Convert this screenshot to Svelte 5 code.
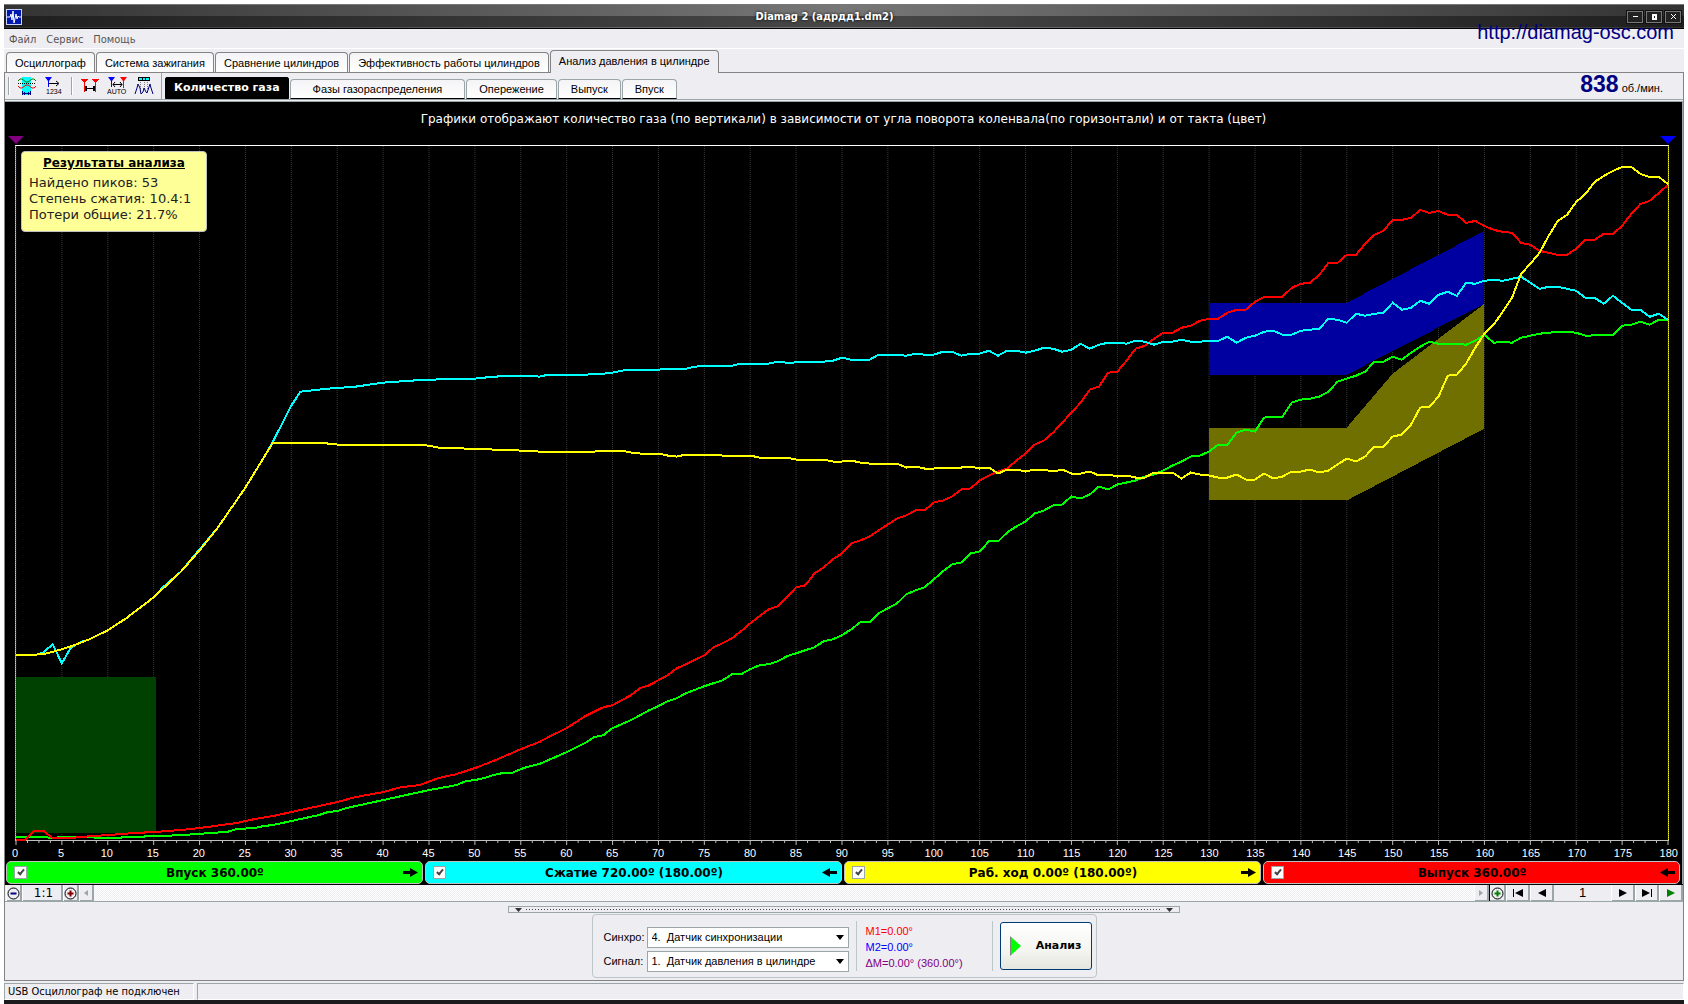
<script lang="ts">
    const TOP = 145;
    const BASE = 840;

    const mainTabs = [
        "Осциллограф",
        "Система зажигания",
        "Сравнение цилиндров",
        "Эффективность работы цилиндров",
        "Анализ давления в цилиндре",
    ];
    const subTabs = [
        "Количество газа",
        "Фазы газораспределения",
        "Опережение",
        "Выпуск",
        "Впуск",
    ];

    let mainTab = $state(4);
    let subTab = $state(0);

    // one curve per stroke, "degree,row" pairs
    let strokes = $state([
        {
            id: "intake",
            label: "Впуск 360.00º",
            color: "#00ff00",
            visible: true,
            forward: true,
            points:
                "0,837 3,837 4,838 5,837 8,837 9,838 11,838 12,837 16,836 18,835 20,834 21,833 23,832 24,829 26,828 27,826 28,825 30,821 32,817 33,815 34,812 35,811 36,808 38,804 40,800 45,790 48,785 49,781 50,780 51,778 52,775 53,773 54,773 55,769 56,766 57,764 58,760 60,752 62,743 63,737 64,735 65,728 67,720 69,710 70,706 71,701 72,698 73,693 75,686 77,680 78,674 79,674 80,669 81,665 82,664 83,661 84,656 85,653 87,647 88,641 89,639 90,635 91,629 92,622 93,622 94,613 95,608 96,603 97,594 98,590 99,587 100,579 101,571 102,564 103,562 104,553 105,551 106,541 107,541 108,532 109,526 110,521 111,513 112,510 113,505 114,504 115,496 116,498 117,494 118,486 119,489 120,484 121,482 122,480 123,476 124,474 125,470 126,465 127,461 128,456 129,455 130,451 131,444 132,444 133,432 134,429 135,431 136,417 137,416 138,416 139,402 140,399 141,398 142,396 143,391 144,381 145,378 146,375 147,371 148,361 149,361 150,356 151,359 152,352 153,346 154,341 155,343 157,343 158,344 159,340 160,334 161,342 162,341 163,342 164,337 165,335 166,333 168,331 169,331 170,332 171,335 174,334 175,325 176,324 177,321 178,324 179,319 180,319",
        },
        {
            id: "compression",
            label: "Сжатие 720.00º (180.00º)",
            color: "#00ffff",
            visible: true,
            forward: false,
            points:
                "0,655 2,655 3,652 4,644 5,663 6,647 7,642 8,639 10,630 12,618 15,597 16,587 18,571 20,549 22,527 25,487 27,457 28,441 29,423 30,405 31,391 34,388 37,386 40,382 43,380 45,379 50,378 52,376 55,375 56,375 57,376 58,374 62,374 64,373 65,372 66,370 67,369 70,369 71,368 73,368 74,366 75,365 78,365 79,363 82,363 83,361 84,362 88,361 89,360 90,357 91,359 93,359 94,354 96,354 97,355 98,353 99,354 100,354 101,351 102,351 103,355 104,353 105,353 106,350 107,355 108,350 109,350 110,352 111,350 112,347 113,348 114,351 115,349 116,343 117,348 118,344 119,342 120,342 121,343 122,340 123,341 124,344 125,341 126,341 127,339 128,341 129,341 130,340 131,340 132,336 133,342 134,337 135,335 136,331 137,330 138,334 139,334 140,330 141,329 142,328 143,318 144,319 145,322 146,313 147,315 148,313 149,312 150,302 151,309 152,307 153,300 154,303 155,294 156,291 157,295 158,282 159,283 160,280 161,279 162,280 163,278 164,276 165,282 166,288 167,286 168,286 169,288 170,290 171,297 172,297 173,303 174,295 175,302 176,309 177,309 178,316 179,313 180,319",
        },
        {
            id: "power",
            label: "Раб. ход 0.00º (180.00º)",
            color: "#ffff00",
            visible: true,
            forward: true,
            points:
                "0,655 3,654 5,649 6,646 8,639 10,630 12,618 15,597 18,571 20,550 22,527 25,487 27,457 28,442 33,442 35,444 42,444 45,445 46,447 49,448 52,449 55,450 57,451 63,451 64,450 66,450 67,452 68,453 70,453 71,455 72,456 73,454 76,454 77,455 80,455 81,457 84,457 85,459 88,459 89,461 90,461 91,460 92,462 93,463 96,463 97,467 98,466 99,468 100,468 101,467 103,467 104,466 105,468 106,467 107,473 108,469 109,469 110,471 111,469 112,469 113,471 114,469 115,473 116,473 117,471 118,475 119,474 120,476 121,475 122,477 123,477 124,472 126,472 127,478 128,472 129,474 130,475 131,477 132,477 133,474 134,479 135,479 136,473 137,478 138,476 139,471 140,471 141,469 142,472 143,470 144,464 145,458 146,461 147,456 148,446 149,446 150,436 151,434 152,424 153,407 154,406 155,396 156,375 157,374 158,363 159,347 160,333 161,324 162,311 163,297 164,273 165,263 166,252 167,235 168,220 169,214 170,201 171,193 172,181 173,175 174,170 175,166 176,166 177,173 178,176 179,176 180,183",
        },
        {
            id: "exhaust",
            label: "Выпуск 360.00º",
            color: "#ff0000",
            visible: true,
            forward: false,
            points:
                "0,840 1,840 2,831 3,831 4,838 6,838 7,837 10,835 13,833 15,832 18,830 20,828 24,823 25,821 26,819 28,816 30,812 34,804 35,802 37,797 40,792 42,787 44,785 46,778 48,774 50,768 52,761 55,749 57,742 58,737 60,728 62,716 64,707 65,705 67,695 68,688 69,685 70,680 71,675 72,668 73,664 75,655 76,647 77,643 78,638 79,631 80,623 81,616 82,609 83,606 84,597 85,587 86,585 87,573 88,567 89,559 90,553 91,543 92,540 93,536 94,530 95,524 96,518 97,515 98,510 99,510 100,502 101,500 102,496 103,489 104,488 105,480 106,475 107,471 108,468 109,460 110,453 111,444 112,440 113,432 114,422 115,412 116,402 117,389 118,386 119,372 120,371 121,360 122,348 123,345 124,338 125,332 126,332 127,327 128,325 129,320 130,318 131,318 132,312 133,309 134,309 135,301 136,296 138,296 139,287 140,283 141,282 142,274 143,262 144,262 145,254 146,254 147,243 148,234 149,230 150,219 151,219 152,217 153,209 154,212 155,210 156,214 157,214 158,222 159,220 160,225 161,229 162,231 163,232 164,242 165,244 166,250 167,252 168,254 169,254 170,248 171,239 172,239 173,233 174,233 175,225 176,213 177,203 178,200 179,192 180,184",
        },
    ]);

    // drawing order differs from the order of the buttons
    const curves = $derived(
        [0, 3, 1, 2].map((i) => strokes[i]).filter((s) => s.visible),
    );

    const zones = [
        { color: "#004000", points: "0,677 15.2,677 15.2,833 0,833" },
        { color: "#0000a0", points: "130,302 145,302 160,230 160,303 145,374 130,374" },
        { color: "#707000", points: "130,427 145,427 150,373 160,303 160,428 145,500 130,500" },
    ];

    const degrees = Array.from({ length: 37 }, (_, i) => i * 5);
    const ticks = Array.from({ length: 145 }, (_, i) => i * 1.25);
</script>

<div class="window">
    <header class="titlebar">
        <svg class="app-icon" width="16" height="16" viewBox="0 0 16 16">
            <rect width="16" height="16" fill="#c8d4ff" />
            <rect x="1" y="1" width="14" height="14" fill="#0018b0" />
            <path d="M1 8h3l1-3 1 6 1-9 1 12 2-9 1 5 1-3 1 1h2" fill="none" stroke="#fff" />
        </svg>
        <h1>Diamag 2 (адрдд1.dm2)</h1>
        <div class="win-buttons">
            <button aria-label="Свернуть">
                <svg width="7" height="7" viewBox="0 0 7 7"><path d="M1 3h5v1H1z" fill="#fff" /></svg>
            </button>
            <button aria-label="Восстановить">
                <svg width="7" height="7" viewBox="0 0 7 7"><path d="M1 1h5v6H1zM3 3v2h1V3z" fill="#fff" fill-rule="evenodd" /></svg>
            </button>
            <button aria-label="Закрыть">
                <svg width="7" height="7" viewBox="0 0 7 7"><path d="M1 1l5 5M6 1L1 6" stroke="#fff" /></svg>
            </button>
        </div>
    </header>

    <nav class="menu">
        <button>Файл</button>
        <button>Сервис</button>
        <button>Помощь</button>
        <a href="http://diamag-osc.com">http://diamag-osc.com</a>
    </nav>

    <div class="tabs main-tabs">
        {#each mainTabs as tab, i}
            <button class:active={mainTab === i} onclick={() => (mainTab = i)}>{tab}</button>
        {/each}
    </div>

    <main>
        <div class="toolbar">
            <div class="tools">
                <button aria-label="Период сигнала">
                    <svg width="20" height="18" viewBox="0 0 20 18">
                        <path d="M5 0h9v18H5z" fill="#00ffff" />
                        <path d="M1 4l2-2h2l4 3h2l4-3h2l2 2" fill="none" stroke="#008000" />
                        <path d="M1 6.5h18" stroke="#000" stroke-dasharray="1 1" />
                        <path d="M1 9l2 2h2l4-3h2l4 3h2l2-2" fill="none" stroke="#ff0000" />
                        <path d="M5 16.5h9M5.5 14v4M13.5 14v4M7.5 15v3M11.5 15v3" stroke="#000080" />
                    </svg>
                </button>
                <button aria-label="Нумерация">
                    <svg width="20" height="18" viewBox="0 0 20 18">
                        <path d="M1 0h7L5 4v6H4V4z" fill="#0000ff" />
                        <path d="M5 6.5h9M12 4l3 2.5L12 9" fill="none" stroke="#000" />
                        <text x="2" y="17" font-size="7">1234</text>
                    </svg>
                </button>
            </div>
            <div class="tools">
                <button aria-label="Маркеры">
                    <svg width="20" height="18" viewBox="0 0 20 18" shape-rendering="crispEdges">
                        <path d="M1 2h7L5 6v9H4V6zM12 2h7l-3 4v9h-1V6z" fill="#ff0000" />
                        <path d="M5 11h10v1H5zM5 9h2v5H5zM13 9h2v5h-2z" fill="#000" />
                    </svg>
                </button>
                <button aria-label="Автоматические маркеры">
                    <svg width="20" height="18" viewBox="0 0 20 18">
                        <path d="M1 0h7L5 4v6H4V4z" fill="#0000ff" />
                        <path d="M13 0h7l-3 4v7h-1V4z" fill="#ff0000" />
                        <path d="M6 7.5h9M8 5L6 7.5 8 10M13 5l2 2.5L13 10" fill="none" stroke="#000" />
                        <text x="0" y="17" font-size="7">AUTO</text>
                    </svg>
                </button>
                <button aria-label="Поиск пиков">
                    <svg width="20" height="18" viewBox="0 0 20 18">
                        <path d="M4 0h12v4H4z" />
                        <path d="M5 1h3v2H5zM9 1h2v2H9zM12 1h3v2h-3z" fill="#00ffff" />
                        <path d="M6.5 5v8M10.5 5v8M13.5 5v8" stroke="#808080" stroke-dasharray="1 1" />
                        <path d="M1 17l2-6 1-4 2 4 1 6 2-2 1-4 2 4 1 1 2-6 1-3 1 4 2 6" fill="none" stroke="#000080" />
                    </svg>
                </button>
            </div>
            <div class="tabs sub-tabs">
                {#each subTabs as tab, i}
                    <button class:active={subTab === i} onclick={() => (subTab = i)}>{tab}</button>
                {/each}
            </div>
            <div class="rpm"><strong>838</strong> об./мин.</div>
        </div>

        <section class="chart">
            <h2>
                Графики отображают количество газа (по вертикали) в зависимости от угла поворота
                коленвала(по горизонтали) и от такта (цвет)
            </h2>
            <div class="markers">
                <i class="marker m1"></i>
                <i class="marker m2"></i>
            </div>
            <div class="plot">
                <svg viewBox="0 {TOP} 180 {BASE - TOP}" preserveAspectRatio="none">
                    {#each degrees as d}
                        <line class="grid" x1={d} y1={TOP} x2={d} y2={BASE} />
                    {/each}
                    {#each zones as zone}
                        <polygon points={zone.points} fill={zone.color} />
                    {/each}
                    {#each curves as curve (curve.id)}
                        <polyline points={curve.points} stroke={curve.color} />
                    {/each}
                    {#each ticks as t}
                        <line class="tick" x1={t} y1={BASE} x2={t} y2={BASE + (t % 5 ? 3 : 5)} />
                    {/each}
                </svg>
                <aside class="results">
                    <h3>Результаты анализа</h3>
                    <p>Найдено пиков: 53</p>
                    <p>Степень сжатия: 10.4:1</p>
                    <p>Потери общие: 21.7%</p>
                </aside>
            </div>
            <div class="scale">
                {#each degrees as d}
                    <span>{d}</span>
                {/each}
            </div>
            <div class="strokes">
                {#each strokes as stroke (stroke.id)}
                    <label class="stroke" style="background-color: {stroke.color}">
                        <input type="checkbox" bind:checked={stroke.visible} />
                        <span>{stroke.label}</span>
                        <svg class:back={!stroke.forward} width="15" height="9" viewBox="0 0 15 9">
                            <path d="M0 3h7V0l8 4.5L7 9V6H0z" />
                        </svg>
                    </label>
                {/each}
            </div>
        </section>

        <div class="scroller">
            <button aria-label="Уменьшить">
                <svg width="13" height="13" viewBox="0 0 13 13">
                    <circle cx="6.5" cy="6.5" r="5.5" fill="none" stroke="#000" />
                    <path d="M3.500 5.500h6v2h-6z" fill="#000080" />
                </svg>
            </button>
            <button class="ratio">1:1</button>
            <button aria-label="Увеличить">
                <svg width="13" height="13" viewBox="0 0 13 13">
                    <circle cx="6.5" cy="6.5" r="5.5" fill="none" stroke="#000" />
                    <path d="M3.5 5.5h2v-2h2v2h2v2h-2v2h-2v-2h-2z" fill="#800000" />
                </svg>
            </button>
            <button class="arrow" aria-label="Влево">
                <svg width="4" height="6" viewBox="0 0 4 6"><path d="M4 0v6L0 3z" fill="#9aa6a8" /></svg>
            </button>
            <div class="track"></div>
            <button class="arrow" aria-label="Вправо">
                <svg width="4" height="6" viewBox="0 0 4 6"><path d="M0 0v6l4-3z" fill="#9aa6a8" /></svg>
            </button>
            <button class="add" aria-label="Добавить">
                <svg width="13" height="13" viewBox="0 0 13 13">
                    <circle cx="6.5" cy="6.5" r="5.5" fill="none" stroke="#000" />
                    <path d="M3.5 5.5h2v-2h2v2h2v2h-2v2h-2v-2h-2z" fill="#008000" />
                </svg>
            </button>
            <button class="step" aria-label="В начало">
                <svg width="10" height="8" viewBox="0 0 10 8"><path d="M0 0h1v8H0zM10 0v8L2 4z" /></svg>
            </button>
            <button class="step" aria-label="Назад">
                <svg width="8" height="8" viewBox="0 0 8 8"><path d="M8 0v8L0 4z" /></svg>
            </button>
            <output>1</output>
            <button class="step" aria-label="Вперёд">
                <svg width="8" height="8" viewBox="0 0 8 8"><path d="M0 0v8l8-4z" /></svg>
            </button>
            <button class="step" aria-label="В конец">
                <svg width="10" height="8" viewBox="0 0 10 8"><path d="M9 0h1v8H9zM0 0v8l8-4z" /></svg>
            </button>
            <button class="step" aria-label="Воспроизвести">
                <svg width="8" height="8" viewBox="0 0 8 8"><path d="M0 0v8l8-4z" fill="#008000" /></svg>
            </button>
        </div>

        <section class="controls">
            <div class="splitter">
                <svg width="7" height="4" viewBox="0 0 7 4"><path d="M0 0h7L3.5 4z" fill="#333" /></svg>
                <i></i>
                <svg width="7" height="4" viewBox="0 0 7 4"><path d="M0 0h7L3.5 4z" fill="#333" /></svg>
            </div>
            <div class="group">
                <div class="fields">
                    <label for="sync">Синхро:</label>
                    <div class="combo">
                        <select id="sync">
                            <option>4.&nbsp; Датчик синхронизации</option>
                        </select>
                        <svg width="8" height="5" viewBox="0 0 8 5"><path d="M0 0h8L4 5z" /></svg>
                    </div>
                    <label for="signal">Сигнал:</label>
                    <div class="combo">
                        <select id="signal">
                            <option>1.&nbsp; Датчик давления в цилиндре</option>
                        </select>
                        <svg width="8" height="5" viewBox="0 0 8 5"><path d="M0 0h8L4 5z" /></svg>
                    </div>
                </div>
                <div class="readings">
                    <span class="r1">M1=0.00°</span>
                    <span class="r2">M2=0.00°</span>
                    <span class="r3">ΔM=0.00° (360.00°)</span>
                </div>
                <button class="analyze">
                    <svg width="11" height="20" viewBox="0 0 11 20">
                        <path d="M0 0v20l2-2V2z" fill="#808080" />
                        <path d="M1 1l10 9-10 9z" fill="#00ff00" />
                    </svg>
                    Анализ
                </button>
            </div>
        </section>
    </main>

    <footer>
        <span class="status">USB Осциллограф не подключен</span>
        <span class="rest"></span>
    </footer>
</div>

<style>
    :global(body) {
        margin: 0;
        background: #fff;
    }

    .window {
        --face: #eeedf2;
        --edge: #9aa6a8;
        --tahoma: "DejaVu Sans Condensed", "DejaVu Sans", sans-serif;
        --verdana: "DejaVu Sans", sans-serif;
        box-sizing: border-box;
        display: flex;
        flex-direction: column;
        height: 100vh;
        min-height: 600px;
        border: 4px solid #fff;
        border-bottom: 0;
        background: var(--face);
        color: #000;
        font: 11px/14px "Liberation Sans", Arial, sans-serif;
    }

    button {
        display: flex;
        align-items: center;
        justify-content: center;
        margin: 0;
        padding: 0;
        border: 0;
        background: none;
        color: inherit;
        font: inherit;
        white-space: nowrap;
    }

    h1,
    h2,
    h3,
    p {
        margin: 0;
    }

    .titlebar {
        display: flex;
        align-items: center;
        flex: none;
        height: 25px;
        padding: 0 3px 0 2px;
        box-sizing: border-box;
        border-top: 1px solid #777;
        border-bottom: 1px solid #000;
        background:
            linear-gradient(#0000 0 11px, #0006 11px 22px, #0000 22px),
            linear-gradient(90deg, #333, #777 50%, #333);
    }

    h1 {
        flex: 1;
        color: #fff;
        font: bold 11px/16px var(--tahoma);
        text-align: center;
        text-shadow: 0 0 3px #000;
    }

    .win-buttons {
        display: flex;
        gap: 3px;
    }

    .win-buttons button {
        box-sizing: border-box;
        width: 16px;
        height: 12px;
        border: 1px solid #777;
        background: #222;
        outline: 1px solid #111;
    }

    .menu {
        display: flex;
        flex: none;
        align-items: center;
        gap: 10px;
        height: 17px;
        padding: 2px 10px 0 5px;
        border-bottom: 1px solid #fff;
        color: #555;
        font: 11px/16px var(--tahoma);
    }

    .menu a {
        margin-left: auto;
        padding-bottom: 16px;
        color: #000080;
        font: 20px/20px "Liberation Sans", Arial, sans-serif;
        text-decoration: none;
    }

    .tabs {
        display: flex;
        align-items: flex-end;
        gap: 1px;
    }

    .tabs button {
        box-sizing: border-box;
        border: 1px solid #848484;
        border-bottom: 0;
        border-radius: 4px 4px 0 0;
        background: linear-gradient(#f4f4f6, #fff);
    }

    .main-tabs {
        flex: none;
        height: 23px;
        padding-left: 2px;
        border-bottom: 1px solid #848484;
    }

    .main-tabs button {
        height: 20px;
        padding: 0 8px;
    }

    .main-tabs .active {
        height: 23px;
        margin-bottom: -1px;
        padding-bottom: 3px;
        background: var(--face);
    }

    main {
        display: flex;
        flex: 1;
        flex-direction: column;
        min-height: 0;
        border-right: 1px solid #848484;
        border-bottom: 1px solid #848484;
        border-left: 1px solid #848484;
    }

    .toolbar {
        display: flex;
        flex: none;
        align-items: center;
        height: 26px;
        border-bottom: 1px solid var(--edge);
    }

    .tools {
        display: flex;
        gap: 7px;
        padding: 0 7px 0 8px;
        border-left: 1px solid var(--edge);
        box-shadow: inset 1px 0 #fff;
    }

    .tools:first-child {
        margin-left: 3px;
    }

    .sub-tabs {
        align-self: stretch;
        padding-left: 3px;
        border-left: 1px solid var(--edge);
    }

    .sub-tabs button {
        height: 20px;
        padding: 0 12px;
        border-color: var(--edge);
        border-bottom: 1px solid #000;
    }

    .sub-tabs button:nth-child(2) {
        padding: 0 22px;
    }

    .sub-tabs .active {
        height: 22px;
        padding: 0 8px;
        border-color: #000;
        border-radius: 2px 2px 0 0;
        background: #000;
        color: #fff;
        font: bold 11px/14px var(--verdana);
    }

    .rpm {
        display: flex;
        align-items: baseline;
        gap: 3px;
        margin-left: auto;
        padding-right: 20px;
        font: 11px/24px "Liberation Sans", Arial, sans-serif;
    }

    .rpm strong {
        color: #000080;
        font-size: 23px;
    }

    .chart {
        display: flex;
        flex: 1;
        flex-direction: column;
        min-height: 0;
        margin-top: 1px;
        border-top: 1px solid var(--edge);
        border-right: 1px solid var(--edge);
        background: #000;
        color: #fff;
    }

    .chart h2 {
        padding: 9px 0;
        font: 12px/16px var(--verdana);
        text-align: center;
    }

    .markers {
        display: flex;
        justify-content: space-between;
        margin: 0 6px 1px 3px;
    }

    .marker {
        border: 8px solid transparent;
        border-top-color: #800080;
        border-bottom: 0;
    }

    .m2 {
        border-top-color: #0000ff;
    }

    .plot {
        position: relative;
        flex: 1;
        min-height: 0;
        margin: 0 13px 0 10px;
        border: solid;
        border-width: 1px;
        border-color: #fff #ffff00 #c0c0c0 #90ff90;
    }

    .plot > svg {
        position: absolute;
        inset: 0;
        width: 100%;
        height: 100%;
        overflow: visible;
        shape-rendering: crispEdges;
    }

    .plot line,
    .plot polyline {
        fill: none;
        vector-effect: non-scaling-stroke;
    }

    .plot polyline {
        stroke-width: 2;
    }

    .grid {
        stroke: #383838;
        stroke-dasharray: 1 1;
    }

    .tick {
        stroke: #c0c0c0;
    }

    .results {
        position: absolute;
        top: 5px;
        left: 5px;
        box-sizing: border-box;
        width: 186px;
        padding: 3px 7px 8px;
        border: 1px solid #c0c0c0;
        border-radius: 4px;
        background: #ffff98;
        color: #222;
        font: 13px/16px var(--verdana);
    }

    .results h3 {
        margin-bottom: 4px;
        color: #000;
        font-size: 12px;
        text-align: center;
        text-decoration: underline;
    }

    .scale {
        display: flex;
        flex: none;
        justify-content: space-between;
        height: 15px;
        margin: 0 13px 0 10px;
        padding-top: 5px;
    }

    .scale span {
        display: flex;
        justify-content: center;
        width: 0;
    }

    .strokes {
        display: flex;
        flex: none;
        gap: 2px;
        padding: 0 2px 0 1px;
    }

    .stroke {
        display: flex;
        flex: 1;
        align-items: center;
        box-sizing: border-box;
        height: 23px;
        padding: 0 4px 0 7px;
        border: 1px solid #c0c0c0;
        border-radius: 5px;
        color: #000;
        font: bold 12px/16px var(--verdana);
    }

    .stroke span {
        flex: 1;
        text-align: center;
    }

    .stroke .back {
        transform: scaleX(-1);
    }

    .stroke input {
        display: flex;
        align-items: center;
        justify-content: center;
        box-sizing: border-box;
        width: 13px;
        height: 13px;
        margin: 0;
        border: 1px solid #9aa6a8;
        background: #fff;
        appearance: none;
    }

    .stroke input:checked::after {
        width: 2px;
        height: 5px;
        margin-bottom: 2px;
        border: solid #444;
        border-width: 0 2px 2px 0;
        content: "";
        transform: rotate(40deg);
    }

    .scroller {
        display: flex;
        flex: none;
        height: 16px;
        padding-left: 1px;
        border-top: 1px solid #000;
        border-bottom: 1px solid var(--edge);
        font: 13px/16px "Liberation Sans", Arial, sans-serif;
    }

    .scroller button {
        box-sizing: border-box;
        width: 16px;
        border-right: 2px solid var(--edge);
        border-left: 1px solid #fff;
        box-shadow: inset 0 -1px var(--edge);
    }

    .scroller .ratio {
        width: 41px;
        padding-left: 3px;
        font: 12px/16px var(--verdana);
    }

    .scroller .arrow {
        width: 15px;
    }

    .track {
        flex: 1;
        background: repeating-conic-gradient(#fff 0 25%, #eeedf2 0 50%) 0 0 / 2px 2px;
    }

    .scroller .add {
        width: 17px;
        border-left: 1px solid #000;
    }

    .scroller .step {
        width: 24px;
    }

    .scroller output {
        width: 57px;
        text-align: center;
    }

    .controls {
        display: flex;
        flex: none;
        flex-direction: column;
        align-items: center;
        padding: 4px 0 2px;
    }

    .splitter {
        display: flex;
        align-items: center;
        gap: 4px;
        box-sizing: border-box;
        width: 40%;
        height: 7px;
        padding: 0 6px;
        border: 1px solid var(--edge);
    }

    .splitter i {
        flex: 1;
        height: 1px;
        background: repeating-linear-gradient(90deg, #444 0 1px, #0000 1px 3px);
    }

    .group {
        display: flex;
        align-items: center;
        box-sizing: border-box;
        height: 64px;
        margin-top: 1px;
        padding: 0 4px 0 11px;
        border: 1px solid #bcc6c8;
        border-radius: 4px;
    }

    .fields {
        display: grid;
        grid-template-columns: 43px 202px;
        gap: 3px 0;
        align-items: center;
        padding: 6px 7px 0 0;
    }

    .combo {
        position: relative;
    }

    .combo select {
        display: block;
        box-sizing: border-box;
        width: 100%;
        height: 21px;
        padding: 0 20px 0 4px;
        border: 1px solid var(--edge);
        border-radius: 0;
        background: #fff;
        color: #000;
        font: 11px/19px "Liberation Sans", Arial, sans-serif;
        appearance: none;
    }

    .combo svg {
        position: absolute;
        top: 8px;
        right: 5px;
        pointer-events: none;
    }

    .readings {
        display: flex;
        flex-direction: column;
        box-sizing: border-box;
        width: 137px;
        padding: 2px 0 0 9px;
        border: solid #bcc6c8;
        border-width: 0 1px;
        line-height: 16px;
    }

    .r1 {
        color: #ff0000;
    }

    .r2 {
        color: #0000ff;
    }

    .r3 {
        color: #800080;
    }

    .analyze {
        gap: 15px;
        box-sizing: border-box;
        width: 92px;
        height: 48px;
        margin-left: 7px;
        border: 1px solid #003c74;
        border-radius: 3px;
        background: linear-gradient(#fff, #f4f4f0 60%, #e6e6e0);
        font: bold 11px/14px var(--verdana);
    }

    footer {
        display: flex;
        flex: none;
        gap: 3px;
        height: 17px;
        padding-top: 2px;
        border-bottom: 4px solid #1c1a1c;
        font: 11px/15px var(--tahoma);
    }

    .status,
    .rest {
        box-sizing: border-box;
        border: 1px solid var(--edge);
        border-right-color: #fff;
        border-bottom-color: #fff;
    }

    .status {
        width: 190px;
        padding-left: 3px;
    }

    .rest {
        flex: 1;
    }
</style>
